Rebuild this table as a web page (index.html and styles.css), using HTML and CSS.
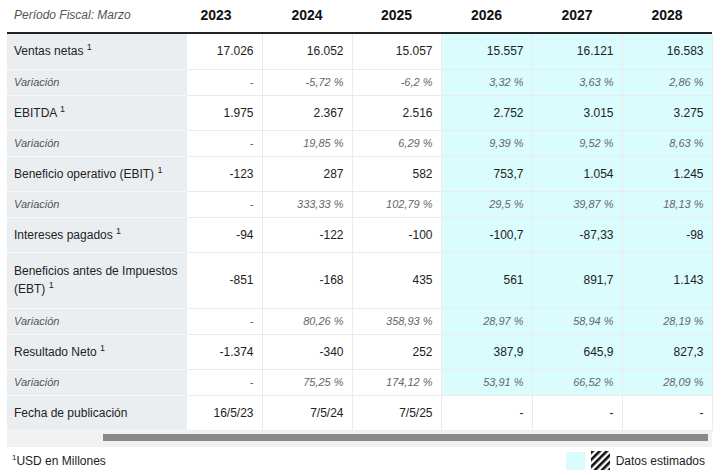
FILE: index.html
```html
<!DOCTYPE html>
<html lang="es">
<head>
<meta charset="utf-8">
<link rel="stylesheet" href="styles.css">
</head>
<body>
<div class="wrap">
  <div class="head">
    <div class="period">Período Fiscal: Marzo</div>
    <div class="yr">2023</div>
    <div class="yr">2024</div>
    <div class="yr">2025</div>
    <div class="yr">2026</div>
    <div class="yr">2027</div>
    <div class="yr">2028</div>
  </div>
  <table class="data">
    <colgroup>
      <col class="c-label"><col class="c-23"><col class="c-24"><col class="c-25"><col class="c-26"><col class="c-27"><col class="c-28">
    </colgroup>
    <tbody>
      <tr class="main"><th>Ventas netas <sup>1</sup></th><td>17.026</td><td>16.052</td><td>15.057</td><td class="est">15.557</td><td class="est">16.121</td><td class="est">16.583</td></tr>
      <tr class="var"><th>Variación</th><td>-</td><td>-5,72 %</td><td>-6,2 %</td><td class="est">3,32 %</td><td class="est">3,63 %</td><td class="est">2,86 %</td></tr>
      <tr class="main"><th>EBITDA <sup>1</sup></th><td>1.975</td><td>2.367</td><td>2.516</td><td class="est">2.752</td><td class="est">3.015</td><td class="est">3.275</td></tr>
      <tr class="var"><th>Variación</th><td>-</td><td>19,85 %</td><td>6,29 %</td><td class="est">9,39 %</td><td class="est">9,52 %</td><td class="est">8,63 %</td></tr>
      <tr class="main"><th>Beneficio operativo (EBIT) <sup>1</sup></th><td>-123</td><td>287</td><td>582</td><td class="est">753,7</td><td class="est">1.054</td><td class="est">1.245</td></tr>
      <tr class="var"><th>Variación</th><td>-</td><td>333,33 %</td><td>102,79 %</td><td class="est">29,5 %</td><td class="est">39,87 %</td><td class="est">18,13 %</td></tr>
      <tr class="main"><th>Intereses pagados <sup>1</sup></th><td>-94</td><td>-122</td><td>-100</td><td class="est">-100,7</td><td class="est">-87,33</td><td class="est">-98</td></tr>
      <tr class="main tall"><th>Beneficios antes de Impuestos (EBT) <sup>1</sup></th><td>-851</td><td>-168</td><td>435</td><td class="est">561</td><td class="est">891,7</td><td class="est">1.143</td></tr>
      <tr class="var"><th>Variación</th><td>-</td><td>80,26 %</td><td>358,93 %</td><td class="est">28,97 %</td><td class="est">58,94 %</td><td class="est">28,19 %</td></tr>
      <tr class="main"><th>Resultado Neto <sup>1</sup></th><td>-1.374</td><td>-340</td><td>252</td><td class="est">387,9</td><td class="est">645,9</td><td class="est">827,3</td></tr>
      <tr class="var"><th>Variación</th><td>-</td><td>75,25 %</td><td>174,12 %</td><td class="est">53,91 %</td><td class="est">66,52 %</td><td class="est">28,09 %</td></tr>
      <tr class="main"><th>Fecha de publicación</th><td>16/5/23</td><td>7/5/24</td><td>7/5/25</td><td>-</td><td>-</td><td>-</td></tr>
    </tbody>
  </table>
  <div class="scroll"><div class="thumb"></div></div>
  <div class="foot">
    <div class="note"><sup>1</sup>USD en Millones</div>
    <div class="legend">
      <span class="swatch"></span>
      <svg class="hatch" width="19" height="19" viewBox="0 0 19 19">
        <defs>
          <pattern id="hp" width="5" height="5" patternUnits="userSpaceOnUse" patternTransform="rotate(45)">
            <rect width="2.6" height="5" fill="#111"/>
          </pattern>
        </defs>
        <rect width="19" height="19" fill="#fff"/>
        <rect width="19" height="19" fill="url(#hp)"/>
      </svg>
      <span class="legend-text">Datos estimados</span>
    </div>
  </div>
</div>
</body>
</html>
```
FILE: styles.css
```css
* { box-sizing: border-box; }
html, body { margin: 0; padding: 0; background: #fff; }
body {
  font-family: "Liberation Sans", Arial, sans-serif;
  font-size: 12px;
  color: #222;
}
.wrap { width: 723px; padding-left: 7px; }

.head {
  display: grid;
  grid-template-columns: 163px 92px 90px 89px 91px 90px 90px;
  width: 705px;
  height: 34px;
  border-bottom: 2px solid #222;
  align-items: center;
  padding-bottom: 2px;
}
.period {
  font-style: italic;
  color: #555;
  padding-left: 7px;
}
.yr {
  text-align: center;
  font-weight: bold;
  font-size: 14px;
  color: #111;
}

.data {
  border-collapse: collapse;
  table-layout: fixed;
  width: 705px;
}
.c-label { width: 180px; }
.c-23 { width: 75px; }
.c-24 { width: 90px; }
.c-25 { width: 89px; }
.c-26 { width: 91px; }
.c-27 { width: 90px; }
.c-28 { width: 90px; }

.data th {
  background: #ebeef1;
  text-align: left;
  font-weight: normal;
  padding: 0 8px 0 7px;
  border-bottom: 1px solid #f6f7f8;
  line-height: 18px;
}
.data td {
  text-align: right;
  padding: 0 8px 0 4px;
  border-bottom: 1px solid #ebebeb;
  border-right: 1px solid #ebebeb;
  white-space: nowrap;
}
.data td.est { background: #dafcfd; }
.data sup { font-size: 9px; vertical-align: 5px; line-height: 0; }

.main th, .main td { height: 35px; color: #222; }
.main.tall th, .main.tall td { height: 56px; }
.var th, .var td {
  height: 26px;
  font-style: italic;
  font-size: 11px;
}
.var th { color: #555; }
.var td { color: #666; }

.scroll {
  width: 705px;
  height: 16px;
  background: #f1f1f1;
  padding: 3px 4px 0 96px;
}
.thumb {
  height: 7px;
  background: #888;
}

.foot {
  display: flex;
  justify-content: space-between;
  align-items: center;
  width: 705px;
  height: 28px;
  padding-right: 7px;
}
.note { padding-left: 5px; color: #222; }
.note sup { font-size: 8px; vertical-align: 5px; line-height: 0; }
.legend { display: flex; align-items: center; gap: 6px; }
.swatch { width: 19px; height: 18px; background: #dafcfd; display: block; }
.hatch { display: block; }
.legend-text { color: #222; }
```
